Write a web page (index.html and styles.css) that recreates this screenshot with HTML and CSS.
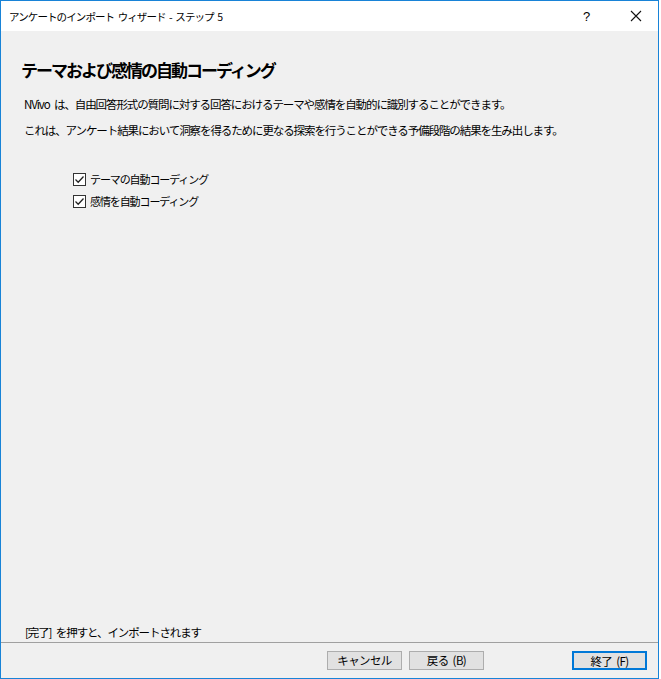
FILE: index.html
```html
<!DOCTYPE HTML>
<html>
<head>
  <title>アンケートのインポート ウィザード - ステップ 5</title>
  <meta charset="utf-8">
  <link rel="stylesheet" href="styles.css">
</head>
<body>
<div class="window">
  <div class="titlebar">
    <span class="title">アンケートのインポート ウィザード - ステップ 5</span>
    <span class="help">?</span>
    <span class="close">
      <svg width="12" height="12" viewBox="0 0 12 12"><path d="M1 1L11 11M11 1L1 11" stroke="#111" stroke-width="1.1" fill="none"/></svg>
    </span>
  </div>

  <div class="content">
    <h1 class="heading">テーマおよび感情の自動コーディング</h1>
    <p class="desc">NVivo は、自由回答形式の質問に対する回答におけるテーマや感情を自動的に識別することができます。</p>
    <p class="desc">これは、アンケート結果において洞察を得るために更なる探索を行うことができる予備段階の結果を生み出します。</p>

    <div class="options">
      <label class="check">
        <span class="box"><svg width="11" height="11" viewBox="0 0 11 11"><path d="M1.5 5.5L4.2 8.2L9.5 2.5" stroke="#222" stroke-width="1.3" fill="none"/></svg></span>
        テーマの自動コーディング
      </label>
      <label class="check">
        <span class="box"><svg width="11" height="11" viewBox="0 0 11 11"><path d="M1.5 5.5L4.2 8.2L9.5 2.5" stroke="#222" stroke-width="1.3" fill="none"/></svg></span>
        感情を自動コーディング
      </label>
    </div>

    <div class="spacer"></div>
    <p class="hint">[完了] を押すと、インポートされます</p>
  </div>

  <div class="footer">
    <button class="btn">キャンセル</button>
    <button class="btn">戻る (B)</button>
    <button class="btn primary">終了 (F)</button>
  </div>
</div>
</body>
</html>
```

FILE: styles.css
```css
body {
  margin: 0;
  background: #fff;
  font-family: "Noto Sans CJK JP", sans-serif;
  color: #000;
}

.window {
  width: 659px;
  height: 679px;
  box-sizing: border-box;
  border: 1px solid #1883d7;
  display: flex;
  flex-direction: column;
  background: #f0f0f0;
}

.titlebar {
  height: 30px;
  background: #fff;
  display: flex;
  align-items: center;
}

.title {
  margin-left: 8px;
  flex: 1;
  font-size: 10.5px;
  letter-spacing: -0.9px;
  word-spacing: 2px;
}

.help {
  width: 14px;
  font-size: 13px;
  font-family: "Liberation Sans", sans-serif;
  margin-right: 33px;
}

.close {
  display: flex;
  margin-right: 16px;
}

.content {
  flex: 1;
  display: flex;
  flex-direction: column;
  padding: 0 0 0 23px;
}

.heading {
  margin: 27px 0 0 -3px;
  font-size: 17px;
  font-weight: bold;
  letter-spacing: -2px;
  line-height: 24px;
}

.desc {
  margin: 0;
  font-size: 11.5px;
  letter-spacing: -1.1px;
  word-spacing: 3px;
  line-height: 26px;
}

.desc:first-of-type {
  margin-top: 9px;
}

.options {
  margin: 25px 0 0 49px;
  display: flex;
  flex-direction: column;
}

.check {
  display: flex;
  align-items: center;
  height: 22px;
  font-size: 11px;
  letter-spacing: -1.1px;
}

.box {
  width: 11px;
  height: 11px;
  border: 1px solid #333;
  background: #fff;
  margin-right: 4px;
  display: flex;
}

.spacer {
  flex: 1;
}

.hint {
  margin: 0 0 1px 1px;
  font-size: 11.5px;
  letter-spacing: -1.1px;
  word-spacing: 3px;
  line-height: 18px;
}

.footer {
  height: 36px;
  border-top: 1px solid #a0a0a0;
  display: flex;
  align-items: center;
  padding-bottom: 1px;
  box-sizing: border-box;
}

.btn {
  width: 75px;
  height: 19px;
  background: #e1e1e1;
  border: 1px solid #adadad;
  font-family: inherit;
  font-size: 11.5px;
  letter-spacing: -0.6px;
  word-spacing: 2px;
  padding: 0;
  line-height: 16px;
  margin-left: 7px;
}

.btn:first-child {
  margin-left: 326px;
}

.btn.primary {
  border: 2px solid #0078d7;
  margin-left: 88px;
}
```
